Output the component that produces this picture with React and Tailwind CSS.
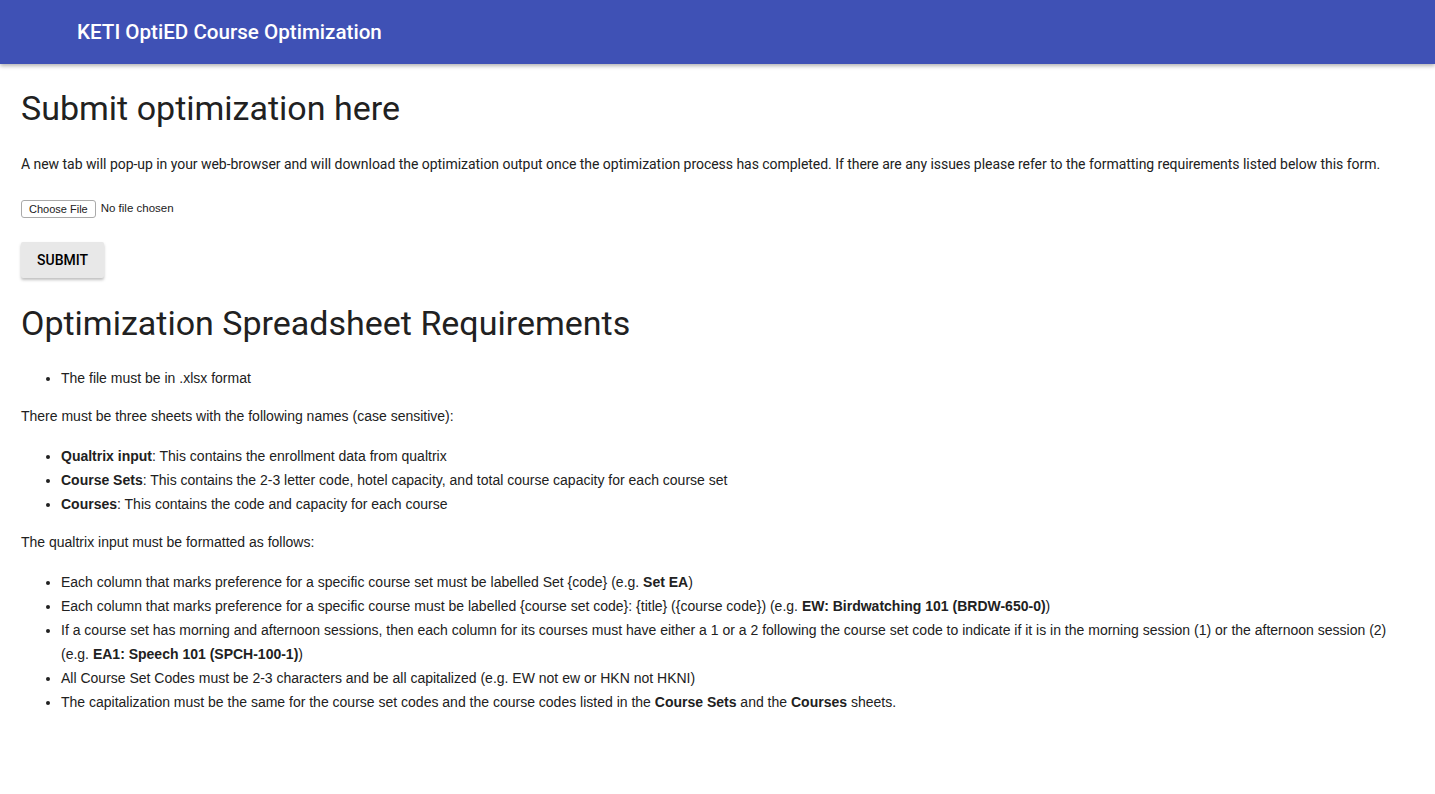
export default function App() {
  return (
    <div className="min-h-screen bg-white font-['Roboto',sans-serif] text-[#212121]">
      <header className="flex h-16 items-center bg-[#3f51b5] pl-[77px] shadow-[0_2px_4px_rgba(0,0,0,0.3)]">
        <h1 className="text-[20.6px] font-medium text-white">KETI OptiED Course Optimization</h1>
      </header>

      <main className="px-[21px]">
        <h2 className="mt-[24px] text-[34px] leading-[40px] text-[#212121]">Submit optimization here</h2>
        <p className="mt-[26px] text-[14px] leading-[20px] tracking-[-0.04px]">
          A new tab will pop-up in your web-browser and will download the optimization output once the optimization
          process has completed. If there are any issues please refer to the formatting requirements listed below
          this form.
        </p>

        <div className="mt-[26px] flex items-center gap-[5px] font-['Liberation_Sans',sans-serif] text-[11.5px]">
          <button className="rounded-[3px] border border-[#aaa] bg-white px-[7px] py-[1px] text-[11px] leading-[14px]">
            Choose File
          </button>
          <span>No file chosen</span>
        </div>

        <button className="mt-[24px] h-9 rounded-[2px] bg-[#e8e8e8] px-4 text-[14px] font-medium uppercase text-black shadow-[0_2px_3px_rgba(0,0,0,0.25)]">
          Submit
        </button>

        <h2 className="mt-[25px] text-[34px] leading-[40px]">Optimization Spreadsheet Requirements</h2>

        <div className="mt-[23px] font-['Liberation_Sans',sans-serif] text-[14px] leading-[24px]">
          <ul className="list-disc pl-[40px]">
            <li>The file must be in .xlsx format</li>
          </ul>
          <p className="mt-[14px]">There must be three sheets with the following names (case sensitive):</p>
          <ul className="mt-[16px] list-disc pl-[40px]">
            <li>
              <b>Qualtrix input</b>: This contains the enrollment data from qualtrix
            </li>
            <li>
              <b>Course Sets</b>: This contains the 2-3 letter code, hotel capacity, and total course capacity for each
              course set
            </li>
            <li>
              <b>Courses</b>: This contains the code and capacity for each course
            </li>
          </ul>
          <p className="mt-[14px]">The qualtrix input must be formatted as follows:</p>
          <ul className="mt-[16px] list-disc pl-[40px]">
            <li>
              Each column that marks preference for a specific course set must be labelled Set {'{code}'} (e.g.{' '}
              <b>Set EA</b>)
            </li>
            <li>
              Each column that marks preference for a specific course must be labelled {'{course set code}'}:{' '}
              {'{title}'} ({'{course code}'}) (e.g. <b>EW: Birdwatching 101 (BRDW-650-0)</b>)
            </li>
            <li>
              If a course set has morning and afternoon sessions, then each column for its courses must have either a
              1 or a 2 following the course set code to indicate if it is in the morning session (1) or the afternoon
              session (2) (e.g. <b>EA1: Speech 101 (SPCH-100-1)</b>)
            </li>
            <li>All Course Set Codes must be 2-3 characters and be all capitalized (e.g. EW not ew or HKN not HKNI)</li>
            <li>
              The capitalization must be the same for the course set codes and the course codes listed in the{' '}
              <b>Course Sets</b> and the <b>Courses</b> sheets.
            </li>
          </ul>
        </div>
      </main>
    </div>
  )
}
